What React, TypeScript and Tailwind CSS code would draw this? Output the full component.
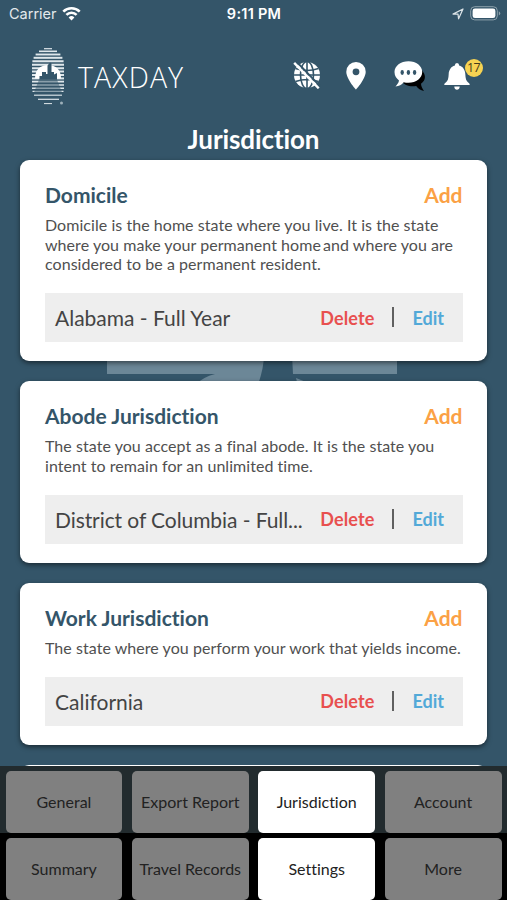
import React from 'react';

type Jurisdiction = {
  title: string;
  lines: React.ReactNode[];
  value: string;
  valueClass: string;
};

const jurisdictions: Jurisdiction[] = [
  {
    title: 'Domicile',
    lines: [
      'Domicile is the home state where you live. It is the state',
      <>where you make your permanent home<span className="[word-spacing:-2px]"> </span>and where you are</>,
      'considered to be a permanent resident.',
    ],
    value: 'Alabama - Full Year',
    valueClass: '',
  },
  {
    title: 'Abode Jurisdiction',
    lines: [
      'The state you accept as a final abode. It is the state you',
      'intent to remain for an unlimited time.',
    ],
    value: 'District of Columbia - Full...',
    valueClass: 'tracking-[-0.08px]',
  },
  {
    title: 'Work Jurisdiction',
    lines: ['The state where you perform your work that yields income.'],
    value: 'California',
    valueClass: '',
  },
];

const subTabs = ['General', 'Export Report', 'Jurisdiction', 'Account'];
const mainTabs = ['Summary', 'Travel Records', 'Settings', 'More'];

const StatusBar = () => (
  <div className="flex h-[28px] items-center pl-[9px] pr-[6px] font-['Inter',sans-serif] text-[14.5px] text-white">
    <div className="flex flex-1 items-center gap-[5px]">
      <span className="text-[#e3e9ec]">Carrier</span>
      <svg className="-mt-[2px]" width="19" height="15" viewBox="0 0 19 15" fill="none" stroke="white" strokeWidth="2.6">
        <path d="M1.3 5.6a11.6 11.6 0 0 1 16.4 0" />
        <path d="M4.4 8.8a7.2 7.2 0 0 1 10.2 0" />
        <path d="M9.5 14.6 6.6 11.5a4.1 4.1 0 0 1 5.8 0z" fill="white" stroke="none" />
      </svg>
    </div>
    <span className="-ml-[2px] font-semibold tracking-[0.25px]">9:11 PM</span>
    <div className="flex flex-1 items-center justify-end gap-[6px]">
      <svg width="12" height="12" viewBox="0 0 12 12" fill="none" stroke="#dce4e8" strokeWidth="1.2" strokeLinejoin="round">
        <path d="M1 6.1 11 1 6.600 10.8 6 6.2z" />
      </svg>
      <svg className="-mt-[2px]" width="31" height="15" viewBox="0 0 31 15">
        <rect x="0.7" y="0.7" width="26.6" height="13.2" rx="4" fill="none" stroke="#8da0ab" strokeWidth="1" />
        <rect x="2.6" y="2.5" width="22.8" height="9.6" rx="2.4" fill="white" />
        <path d="M28.8 5.2q3 2.2 0 4.4z" fill="#8da0ab" />
      </svg>
    </div>
  </div>
);

const Logo = () => (
  <svg width="34" height="58" viewBox="0 0 34 58">
    <g stroke="#dfe7eb">
      <path d="M13 1.7h8" strokeWidth="1.2" />
      <path d="M8 4.3h18" strokeWidth="1.6" />
      <path d="M4.6 7.5h24.8" strokeWidth="1.9" />
      <path d="M2.6 10.8h28.8" strokeWidth="2" />
      <path d="M1.4 14.2h31.2M1 17.7h32" strokeWidth="2" />
      <path d="M1 21.2h32M1 24.6h32M1 28h32" strokeWidth="2" />
      <path d="M1 31.4h32" strokeWidth="2" />
      <path d="M1 34.6h32" strokeWidth="1.8" />
      <path d="M1 37.9h32M1 41.3h32" strokeWidth="1.5" />
      <path d="M1.5 44.4h31M3 48h28" strokeWidth="1.3" />
      <path d="M7 52.3h21" strokeWidth="1.2" />
      <path d="M13 56.6h8" strokeWidth="1" />
    </g>
    {/* bay in front of the skyline */}
    <path d="M9 30h16l7 18H2z" fill="#345569" opacity="0.5" />
    <path d="M4 31.500C4 23 9 18 17 18s13 5 13 13.500z" fill="white" />
    <path d="M8.500 32.500V29H11v-4h4v2h1.500V18.500l2.500-3 1.500 1V25h2.500v2.500l3-1.500v6.500z" fill="#345569" />
    <circle cx="30.5" cy="56" r="1.5" fill="#9db0ba" />
  </svg>
);

const Header = () => (
  <header className="flex h-[96px] items-start pl-[31px] pr-[23px] pt-[19px]">
    <Logo />
    <span className="ml-[13px] mt-[9px] font-['Open_Sans',sans-serif] text-[28.5px] font-light leading-[42px] tracking-[1.1px] text-white">
      TAXDAY
    </span>
    <div className="ml-auto flex items-start pt-[14px]">
      <svg width="28" height="28" viewBox="0 0 28 28" fill="none">
        <circle cx="14" cy="14" r="13" fill="white" />
        <g stroke="#345569" strokeWidth="1.6">
          <path d="M14 0v28M0 14h28M2.5 7.5q11.5 4 23 0M2.5 20.5q11.5-4 23 0" />
          <ellipse cx="14" cy="14" rx="6.5" ry="13.5" />
        </g>
        <path d="m3.4 0.6 24 25" stroke="#345569" strokeWidth="2" />
        <path d="m1.2 1.8 24.5 25.5" stroke="white" strokeWidth="2.4" />
      </svg>
      <svg className="ml-[25px] mt-px" width="20" height="28" viewBox="0 0 20 28">
        <path
          fillRule="evenodd"
          d="M10 0a9.7 9.7 0 0 0-9.7 9.7C.3 17 10 27.5 10 27.5S19.7 17 19.7 9.7A9.7 9.7 0 0 0 10 0zm0 6.4a3.4 3.4 0 1 1 0 6.8 3.4 3.4 0 0 1 0-6.8z"
          fill="white"
        />
      </svg>
      <svg className="ml-[28px]" width="32" height="31" viewBox="0 0 32 31">
        <path d="M28 9.5c4.5 5 3.5 10-1 13.3.2 2.7 1.4 5 3 7.2-3.5-.8-6-2.3-7.8-5C16 26 10 24.5 8 20z" fill="black" />
        <path d="M14.5.3C6.7.3.5 5 .5 11c0 3.8 2 6.5 4.5 8.5-.4 2.3-1.7 4-3.5 6 3.5-.3 6.2-1.7 8.2-4.3 1.500.4 3 .6 4.8.6 7.700 0 13.700-4.800 13.700-10.800S22.200.3 14.500.3z" fill="white" />
        <g fill="#345569">
          <ellipse cx="8.2" cy="11.5" rx="1.7" ry="2.4" />
          <ellipse cx="14.4" cy="11.5" rx="1.7" ry="2.4" />
          <ellipse cx="20.6" cy="11.5" rx="1.7" ry="2.4" />
        </g>
      </svg>
      <div className="relative ml-[18px] mt-[2px] w-[40px]">
        <svg width="26" height="28" viewBox="0 0 26 28" fill="white">
          <path d="M13 0a2.2 2.2 0 0 1 2.1 2.4c4 1 6 4.6 6.2 8.6.2 4.5.8 7 3.2 8.7 1 .8 1.2 1.2 1.2 2.3H.3c0-1.1.2-1.5 1.2-2.3 2.4-1.7 3-4.2 3.2-8.7.2-4 2.2-7.6 6.2-8.600A2.200 2.200 0 0 1 13 0z" />
          <path d="M10.3 23.5h5.4c0 4.3-5.4 4.3-5.4 0z" />
        </svg>
        <span className="absolute -top-[4px] left-[21px] flex h-[18px] w-[18px] items-center justify-center rounded-full bg-[#f7d352] pr-px font-['Open_Sans',sans-serif] text-[12.5px] leading-none tracking-[-0.6px] text-[#453b1c]">
          17
        </span>
      </div>
    </div>
  </header>
);

const Card: React.FC<{ item: Jurisdiction }> = ({ item }) => (
  <section className="rounded-[9px] bg-white pb-[19px] pl-[25px] pr-[24.5px] pt-[21px] shadow-[0_2px_5px_rgba(0,0,0,0.5)]">
    <div className="flex items-center justify-between text-[21px] font-bold leading-[28px]">
      <h2 className="text-[#345569]">{item.title}</h2>
      <button className="text-[#fba145]">Add</button>
    </div>
    <div className="mb-[19.5px] mt-[6px] whitespace-nowrap text-[16px] leading-[19.5px] tracking-[0.05px] text-[#505050]">
      {item.lines.map((line, i) => (
        <p key={i}>{line}</p>
      ))}
    </div>
    <div className="flex h-[49px] items-center bg-[#eeeeee] pl-[10px] pr-[18.5px] pt-px text-[18px] font-bold">
      <span className={`flex-1 whitespace-nowrap text-[21px] font-normal text-[#444444] ${item.valueClass}`}>{item.value}</span>
      <button className="tracking-[0.15px] text-[#e8504f]">Delete</button>
      <span className="-mt-[2px] ml-[18px] h-[20px] w-[2px] bg-[#606060]" />
      <button className="ml-[18px] text-[#52a9d8]">Edit</button>
    </div>
  </section>
);

const TabRow: React.FC<{ tabs: string[]; active: string }> = ({ tabs, active }) => (
  <div className="grid grid-cols-4 gap-[9.5px] px-[5.5px]">
    {tabs.map((tab) => (
      <button
        key={tab}
        className={`h-[62px] whitespace-nowrap rounded-[5px] text-[16px] text-[#222222] ${tab === active ? 'bg-white' : 'bg-[#808080]'}`}
      >
        {tab}
      </button>
    ))}
  </div>
);

export default function App() {
  return (
    <div className="relative flex h-[900px] w-[507px] flex-col overflow-hidden bg-[#345569] font-['Lato',sans-serif] [font-variant-ligatures:none]">
      {/* watermark showing through the gap between the cards */}
      <svg className="absolute left-[107px] top-[355px]" width="291" height="30" viewBox="0 0 291 30" fill="#6c8797">
        <path d="M0 0h157q0 12-6 30H88q8-8 20-11H0z" />
        <path d="M185 0h105v19H186z" />
        <path d="m189 23 10 4h-9z" />
      </svg>
      <StatusBar />
      <Header />
      <h1 className="h-[36px] text-center text-[26px] font-bold leading-[30px] tracking-[-0.1px] text-white">Jurisdiction</h1>
      <main className="relative flex min-h-0 flex-1 flex-col gap-[20px] px-[20px]">
        {jurisdictions.map((item) => (
          <Card key={item.title} item={item} />
        ))}
        <div className="h-[20px] shrink-0 rounded-t-[9px] bg-white" />
      </main>
      <nav className="relative shrink-0">
        <div className="h-[67px] bg-[#222b2e] pt-[4.5px]">
          <TabRow tabs={subTabs} active="Jurisdiction" />
        </div>
        <div className="h-[67px] bg-black pt-[5px]">
          <TabRow tabs={mainTabs} active="Settings" />
        </div>
      </nav>
    </div>
  );
}
